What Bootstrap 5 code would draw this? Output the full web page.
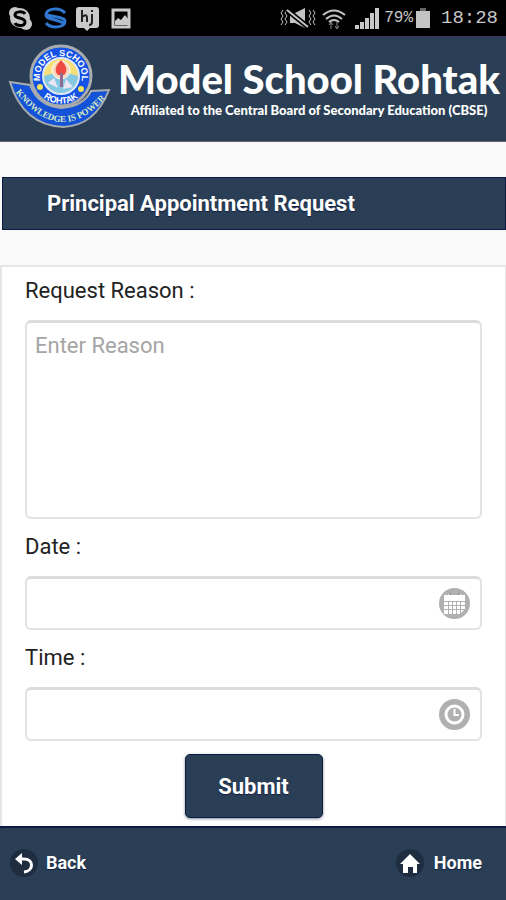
<!DOCTYPE html>
<html lang="en">
<head>
<meta charset="utf-8">
<meta name="viewport" content="width=device-width, initial-scale=1">
<title>Model School Rohtak</title>
<link href="https://cdn.jsdelivr.net/npm/bootstrap@5.3.0/dist/css/bootstrap.min.css" rel="stylesheet">
<style>
  :root { --navy: #2a3f55; --navy-edge: #0c1c40; }
  body { font-family: Roboto, "Liberation Sans", sans-serif; background: #f9f9f9; color: #222; }
  .status-bar { height: 36px; background: #000; color: #c8c8c8; font-family: "Liberation Mono", monospace; }
  .status-bar .charge { font-size: 16px; line-height: 20px; }
  .status-bar .clock { font-size: 19px; line-height: 20px; }
  .brand-bar { height: 106px; background: var(--navy); border-top: 2px solid #34365a; border-bottom: 1px solid #6b6478; color: #fff; }
  .brand-text { padding-top: 20px; }
  .brand-name { font: 900 40px/42px Lato, sans-serif; }
  .brand-note { font: 900 13px/20px Lato, sans-serif; }
  .page-title { margin: 35px 0 35px 2px; padding: 0 44px; font-size: 22px; line-height: 51px; font-weight: 700; color: #fff; background: var(--navy); border: 1px solid var(--navy-edge); text-shadow: 0 1px 1px #101c40; }
  .request-form { background: #fff; border: 2px solid #e6e6e6; border-right-width: 1px; border-bottom: 0; padding: 0 23px 7px; }
  .request-form label { font-size: 22px; line-height: 24px; margin: 16px 0 17px; display: block; }
  .request-form label:first-child { margin-top: 12px; }
  .field { border: 2px solid #e2e2e2; border-top: 3px solid #dcdcdc; border-radius: 6px; font-size: 22px; line-height: 26px; padding: 10px 8px; background: #fff; color: #222; }
  .field::placeholder { color: #a5a5a5; }
  textarea.field { height: 199px; resize: none; }
  .entry { height: 54px; padding-right: 52px; }
  .entry-icon { right: 12px; top: 12px; width: 31px; height: 31px; }
  .send { width: 138px; height: 64px; margin-top: 13px; font-size: 22px; font-weight: 700; color: #fff; background: var(--navy); border: 1px solid var(--navy-edge); border-radius: 5px; box-shadow: 0 1px 3px #2a3f5599; text-shadow: 0 1px 1px #101c40; }
  .send:hover { color: #fff; background: #35506c; }
  .bottom-bar { height: 74px; padding-bottom: 3px; background: var(--navy); border-top: 2px solid var(--navy-edge); }
  .bottom-bar a { font-size: 18px; line-height: 24px; font-weight: 700; color: #fff; text-shadow: 0 1px 1px #101c40; }
</style>
</head>
<body class="d-flex flex-column min-vh-100">
<div class="status-bar d-flex align-items-center justify-content-between ps-2 pe-2">
  <svg width="126" height="28" viewBox="0 0 126 28" aria-hidden="true">
    <g fill="#c9c9c9"><circle cx="12" cy="14" r="10"/><circle cx="7" cy="9" r="6"/><circle cx="18" cy="20" r="6"/></g>
    <path d="M17 10C15 7 7 7 7 11s10 2 10 7-9 4-10 1" fill="none" stroke="#000" stroke-width="3"/>
    <path d="M57 9C52 3 38 4 38 11c0 4 5 3 18 8M38 19c5 6 19 5 19-2 0-3-5-3-18-6" fill="none" stroke="#2f77cf" stroke-width="3"/>
    <path d="M71 3h17q3 0 3 3v15q0 3-3 3h-6l-3 3-3-3h-5q-3 0-3-3V6q0-3 3-3z" fill="#c9c9c9"/>
    <path d="M74 6v12m0-5q5-4 5 1v4M84 10v8q0 3-3 3M84 6v2" fill="none" stroke="#222" stroke-width="2"/>
    <path d="M105 6h16v17h-16z" fill="none" stroke="#c9c9c9" stroke-width="3"/><path d="m107 21 0-4 3-3 3 2 4-5 3 4v6z" fill="#c9c9c9"/>
  </svg>
  <div class="d-flex align-items-center">
    <svg width="104" height="28" viewBox="0 0 104 28" aria-hidden="true">
      <g fill="none" stroke="#c4c4c4" stroke-width="2">
        <path d="m3 6-2 3 2 3-2 3 2 3-2 3M7 6l-2 3 2 3-2 3 2 3-2 3M29 6l2 3-2 3 2 3-2 3 2 3M33 6l2 3-2 3 2 3-2 3 2 3" stroke-width="1"/>
        <path d="M43 11q11-9 22 0M46 15q8-7 16 0M49 18q5-4 10 0"/>
        <path d="M51 25v-6m-2 2 2-3 2 3M57 18v6m-2-2 2 3 2-3" stroke="#888" stroke-width="1"/>
      </g>
      <path d="M10 9v10h5l10 5V4L15 9z" fill="#c4c4c4"/>
      <path d="m7 6 21 17" fill="none" stroke="#000" stroke-width="5"/>
      <path d="m7 6 21 17" fill="none" stroke="#c4c4c4" stroke-width="2"/>
      <path d="M75 25v-4h4v4zM80 25v-7h4v7zM85 25V14h4v11zM90 25V9h4v16zM95 25V4h4v21z" fill="#c9c9c9"/>
    </svg>
    <span class="charge">79%</span>
    <svg width="20" height="28" viewBox="0 0 20 28" aria-hidden="true"><path d="M7 4h6v3H7z" fill="#666"/><path d="M3 7h14v17H3z" fill="#c4c4c4"/></svg>
    <span class="clock ms-2">18:28</span>
  </div>
</div>

<header class="brand-bar d-flex align-items-start">
  <svg class="flex-shrink-0 ms-2 mt-1" width="104" height="88" viewBox="0 0 104 88" role="img" aria-label="Model School Rohtak emblem">
    <defs>
      <path id="ringTop" d="M34 44A21 21 0 1 1 72 44"/>
      <path id="ringBottom" d="M27 42A27 27 0 0 0 79 42"/>
      <path id="ribbon" d="M9 52Q52 105 96 58"/>
    </defs>
    <path d="M2 40 22 43Q30 64 53 66 76 64 83 49L101 48Q87 84 55 85 15 83 2 40z" fill="#1453d8" stroke="#a9acae" stroke-width="2"/>
    <circle cx="53" cy="34" r="30" fill="#1453e6" stroke="#a9acae" stroke-width="3"/>
    <circle cx="53" cy="34" r="18" fill="#f5df76" stroke="#dbe8ff" stroke-width="2"/>
    <path d="M36 34Q53 27 70 34A17 17 0 0 1 36 34z" fill="#85c8e3"/>
    <circle cx="53" cy="28" r="9" fill="#f8d7bd" stroke="#fff"/>
    <path d="M53 18q9 9 3 15h-6q-6-6 3-15z" fill="#ee4b42"/><path d="M52 31h3v14h-3z" fill="#926a92"/>
    <path d="m40 41 6-5 4 10zm15 6 3-10 7 8z" fill="#e9e5f5"/>
    <circle cx="32" cy="45" r="3" fill="#f3e45d"/><circle cx="73" cy="47" r="3" fill="#f3e45d"/>
    <g fill="#fff" font-family="Liberation Sans, sans-serif" font-weight="700" text-anchor="middle">
      <text font-size="9"><textPath href="#ringTop" startOffset="50%">MODEL SCHOOL</textPath></text>
      <text font-size="9"><textPath href="#ringBottom" startOffset="50%">ROHTAK</textPath></text>
      <text font-size="9" font-family="Liberation Serif, serif" fill="#d7e8c0"><textPath href="#ribbon" startOffset="50%">KNOWLEDGE IS POWER</textPath></text>
    </g>
  </svg>
  <div class="brand-text flex-grow-1 text-center text-nowrap">
    <div class="brand-name">Model School Rohtak</div>
    <div class="brand-note">Affiliated to the Central Board of Secondary Education (CBSE)</div>
  </div>
</header>

<main class="flex-grow-1 d-flex flex-column">
  <h1 class="page-title">Principal Appointment Request</h1>
  <form class="request-form flex-grow-1">
    <label for="reason">Request Reason :</label>
    <textarea id="reason" class="field d-block w-100" placeholder="Enter Reason"></textarea>
    <label for="date">Date :</label>
    <div class="position-relative">
      <input id="date" type="text" class="field entry d-block w-100">
      <svg class="entry-icon position-absolute" viewBox="0 0 31 31" aria-hidden="true">
        <circle cx="15.500" cy="15.500" r="15.500" fill="#b0b0b0"/>
        <path d="M5 7h4v-1h3v1h7v-1h3v1h4v6H5zM5 14h4v3H5zm5 0h3v3h-3zm4 0h3v3h-3zm4 0h3v3h-3zm4 0h4v3h-4zM5 18h4v3H5zm5 0h3v3h-3zm4 0h3v3h-3zm4 0h3v3h-3zm4 0h4v3h-4zM5 22h4v4H5zm5 0h3v4h-3zm4 0h3v4h-3zm4 0h3v4h-3zm4 0h3l-3 3z" fill="#fff"/>
        <path d="M10 5h2v2h-2zm9 0h2v2h-2z" fill="#9a9a9a"/>
      </svg>
    </div>
    <label for="time">Time :</label>
    <div class="position-relative">
      <input id="time" type="text" class="field entry d-block w-100">
      <svg class="entry-icon position-absolute" viewBox="0 0 31 31" aria-hidden="true">
        <circle cx="15.500" cy="15.500" r="15.500" fill="#b0b0b0"/>
        <circle cx="15.500" cy="15.500" r="8.500" fill="none" stroke="#fff" stroke-width="3"/>
        <path d="M15.500 10v6H20" fill="none" stroke="#fff" stroke-width="2"/>
      </svg>
    </div>
    <div class="text-center"><button type="submit" class="btn send">Submit</button></div>
  </form>
</main>

<nav class="bottom-bar d-flex align-items-center justify-content-between ps-2 pe-4" aria-label="Page">
  <a href="#" class="d-flex align-items-center gap-2 text-decoration-none">
    <svg width="30" height="30" viewBox="0 0 30 30" aria-hidden="true"><circle cx="16" cy="15" r="14" fill="#1e2d40"/><path d="M12 11h4c10 0 10 12 0 13" fill="none" stroke="#fff" stroke-width="3"/><path d="m7 11 7-6v12z" fill="#fff"/></svg>
    Back</a>
  <a href="#" class="d-flex align-items-center gap-2 text-decoration-none">
    <svg width="30" height="30" viewBox="0 0 30 30" aria-hidden="true"><circle cx="14" cy="15" r="14" fill="#1e2d40"/><path d="m14 6 10 10h-3v9h-4v-6h-5v6H7v-9H4z" fill="#fff"/></svg>
    Home</a>
</nav>
<script src="https://cdn.jsdelivr.net/npm/bootstrap@5.3.0/dist/js/bootstrap.bundle.min.js"></script>
</body>
</html>
